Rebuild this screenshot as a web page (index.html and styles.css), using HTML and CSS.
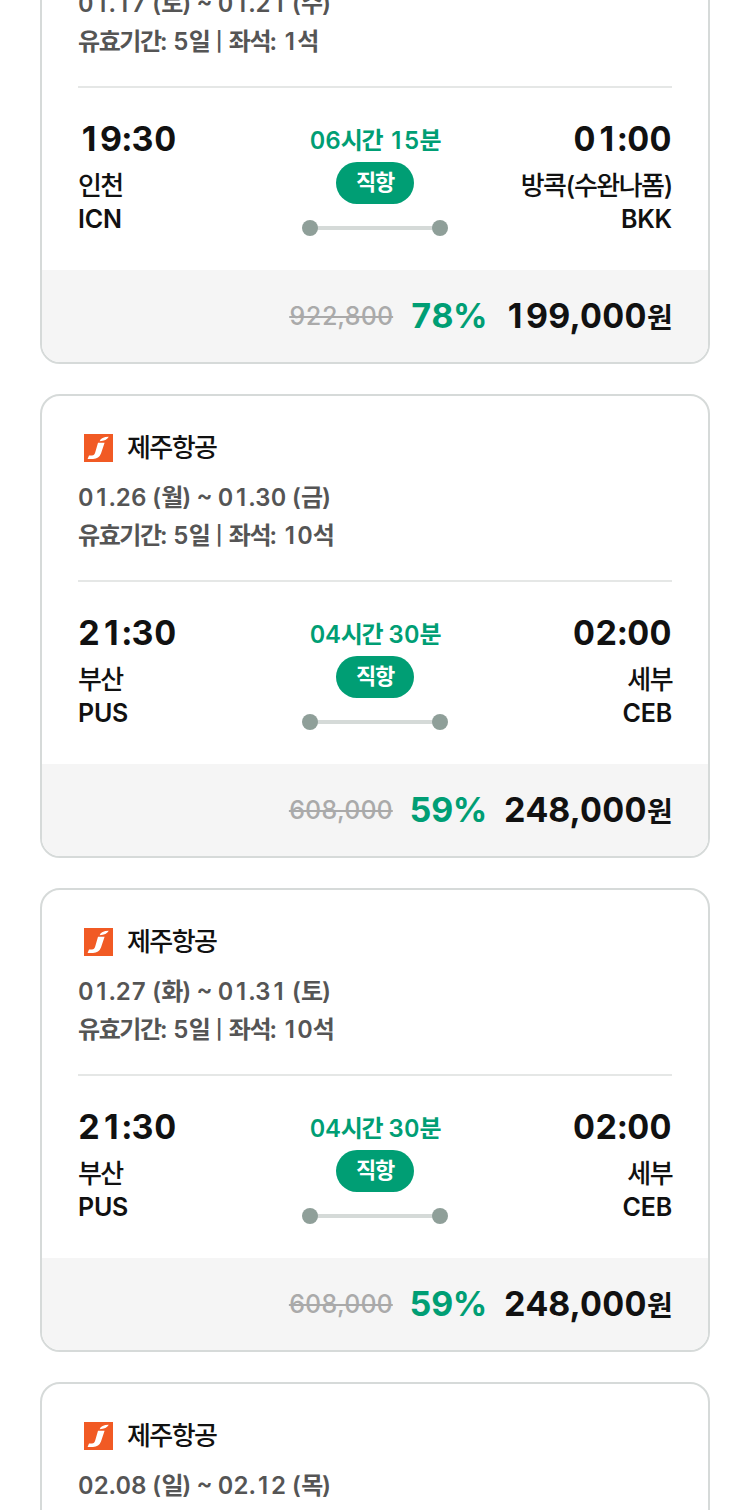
FILE: index.html
```
<!DOCTYPE html>
<html lang="ko">
<head>
  <meta charset="UTF-8">
  <meta name="viewport" content="width=device-width, initial-scale=1.0">
  <title>특가 항공권</title>
  <link rel="stylesheet" href="styles.css">
</head>
<body>
  <div class="ticket-list" id="ticketList"></div>
  <script src="tickets.js"></script>
</body>
</html>
```
FILE: styles.css
```
* {
  margin: 0;
  padding: 0;
  box-sizing: border-box;
}

body {
  font-family: Inter, 'Noto Sans CJK KR', sans-serif;
  font-feature-settings: "tnum";
  background-color: #ffffff;
  color: #111111;
  height: 1510px;
  overflow: hidden;
}

.ticket-list {
  display: flex;
  flex-direction: column;
  gap: 30px;
  height: 1610px;
  margin-top: -100px;
  padding: 0 40px;
  overflow: hidden;
}

.ticket {
  flex: none;
  height: 464px;
  border: 2px solid #d6dad9;
  border-radius: 20px;
  overflow: hidden;
}

/* Hangul glyphs are set tighter than the digits */
.ko {
  letter-spacing: -0.06em;
}

/* plain "1" in a tabular width, without the foot */
.one {
  display: inline-block;
  width: 0.645em;
  text-align: center;
  letter-spacing: 0;
  font-feature-settings: normal;
}

.ticket-head {
  height: 186px;
  margin: 0 36px;
  padding-top: 30px;
  border-bottom: 2px solid #e5e7e6;
}

.airline {
  display: flex;
  align-items: center;
  height: 42px;
  padding-left: 6px;
  margin-bottom: 11px;
  font-size: 26px;
  font-weight: 500;
  line-height: 38px;
}

.airline .ko {
  margin-top: 2px;
}

.airline-logo {
  width: 29px;
  height: 28px;
  margin: 2px 14px 0 0;
}

.info {
  font-size: 24px;
  font-weight: 600;
  line-height: 38px;
  color: #555555;
  white-space: nowrap;
  word-spacing: -1px;
}

.valid {
  word-spacing: -0.2px;
}

.valid .one {
  width: 0.6em;
}

.bar {
  font-size: 19px;
  line-height: 1;
  vertical-align: 2px;
}

.tilde {
  line-height: 1;
  vertical-align: 2px;
}

.route {
  display: flex;
  justify-content: space-between;
  height: 182px;
  padding: 30px 36px 0;
}

.place {
  width: 200px;
  white-space: nowrap;
}

.arrival {
  text-align: right;
}

.time {
  font-size: 34px;
  font-weight: 700;
  line-height: 41px;
  letter-spacing: 0.4px;
  margin-bottom: 10px;
}

.city {
  font-size: 26px;
  font-weight: 500;
  line-height: 34px;
}

.code {
  font-size: 25px;
  font-weight: 600;
  line-height: 33px;
  letter-spacing: -0.2px;
}

.flight {
  display: flex;
  flex-direction: column;
  align-items: center;
  width: 146px;
}

.duration {
  height: 44px;
  font-size: 24px;
  font-weight: 600;
  line-height: 45px;
  color: #009e74;
  white-space: nowrap;
}

.direct {
  width: 78px;
  height: 42px;
  margin-bottom: 16px;
  border-radius: 21px;
  background: #009e74;
  color: #ffffff;
  font-size: 22px;
  font-weight: 600;
  line-height: 40px;
  text-align: center;
}

.path-line {
  display: block;
}

.price {
  display: flex;
  justify-content: flex-end;
  align-items: center;
  height: 92px;
  padding-right: 37px;
  background: #f5f5f5;
  white-space: nowrap;
}

.before {
  font-size: 25px;
  font-weight: 500;
  color: #aaaaaa;
  text-decoration: line-through;
  margin: 0 17px 1px 0;
}

.rate {
  font-size: 34px;
  font-weight: 700;
  letter-spacing: -0.5px;
  color: #009e74;
  margin: 0 17px 1px 0;
}

.total {
  font-size: 34px;
  font-weight: 700;
  letter-spacing: 0.3px;
  margin-bottom: 1px;
}

.won {
  font-size: 28px;
}
```
FILE: tickets.js
```
const tickets = [
  {
    dates: ["01.17", "토", "01.21", "수"], seats: "1",
    from: ["19:30", "인천", "ICN"], to: ["01:00", "방콕(수완나폼)", "BKK"],
    hours: "06", minutes: "15", before: "922,800", rate: "78%", total: "199,000"
  },
  {
    dates: ["01.26", "월", "01.30", "금"], seats: "10",
    from: ["21:30", "부산", "PUS"], to: ["02:00", "세부", "CEB"],
    hours: "04", minutes: "30", before: "608,000", rate: "59%", total: "248,000"
  },
  {
    dates: ["01.27", "화", "01.31", "토"], seats: "10",
    from: ["21:30", "부산", "PUS"], to: ["02:00", "세부", "CEB"],
    hours: "04", minutes: "30", before: "608,000", rate: "59%", total: "248,000"
  },
  {
    dates: ["02.08", "일", "02.12", "목"], seats: "10",
    from: ["21:30", "부산", "PUS"], to: ["02:00", "세부", "CEB"],
    hours: "04", minutes: "30", before: "608,000", rate: "59%", total: "248,000"
  }
];

function ko(text) {
  return `<span class="ko">${text}</span>`;
}

function num(text) {
  return text.replace(/1/g, '<span class="one">1</span>');
}

function place(data, side) {
  return `
    <div class="place ${side}">
      <p class="time">${num(data[0])}</p>
      <p class="city">${ko(data[1])}</p>
      <p class="code">${data[2]}</p>
    </div>`;
}

function ticketCard(t) {
  const d = t.dates;
  return `
    <div class="ticket">
      <div class="ticket-head">
        <div class="airline">
          <svg class="airline-logo" viewBox="0 0 29 28">
            <rect width="29" height="28" fill="#f15a24"/>
            <path d="M14 8.8H20.6L17 19.5Q15 24.8 9 25H3.6L5 21.6H8Q10.4 21.6 11.2 18.6ZM15.6 7.2Q17 3 24.8 2.8Q22.6 7 15.6 7.2Z" fill="#fff"/>
          </svg>
          ${ko("제주항공")}
        </div>
        <p class="info">${num(d[0])} (${ko(d[1])}) <span class="tilde">~</span> ${num(d[2])} (${ko(d[3])})</p>
        <p class="info valid">${ko("유효기간")}: 5${ko("일")} <span class="bar">|</span> ${ko("좌석")}: ${num(t.seats)}${ko("석")}</p>
      </div>
      <div class="route">
        ${place(t.from, "departure")}
        <div class="flight">
          <p class="duration">${t.hours}${ko("시간")} ${num(t.minutes)}${ko("분")}</p>
          <span class="direct">${ko("직항")}</span>
          <svg class="path-line" width="146" height="16">
            <path d="M8 8H138" stroke="#d5dad8" stroke-width="4"/>
            <circle cx="8" cy="8" r="8" fill="#8f9f99"/>
            <circle cx="138" cy="8" r="8" fill="#8f9f99"/>
          </svg>
        </div>
        ${place(t.to, "arrival")}
      </div>
      <div class="price">
        <span class="before">${t.before}</span>
        <span class="rate">${t.rate}</span>
        <span class="total">${num(t.total)}<span class="ko won">원</span></span>
      </div>
    </div>`;
}

document.getElementById("ticketList").innerHTML = tickets.map(ticketCard).join("");
```
